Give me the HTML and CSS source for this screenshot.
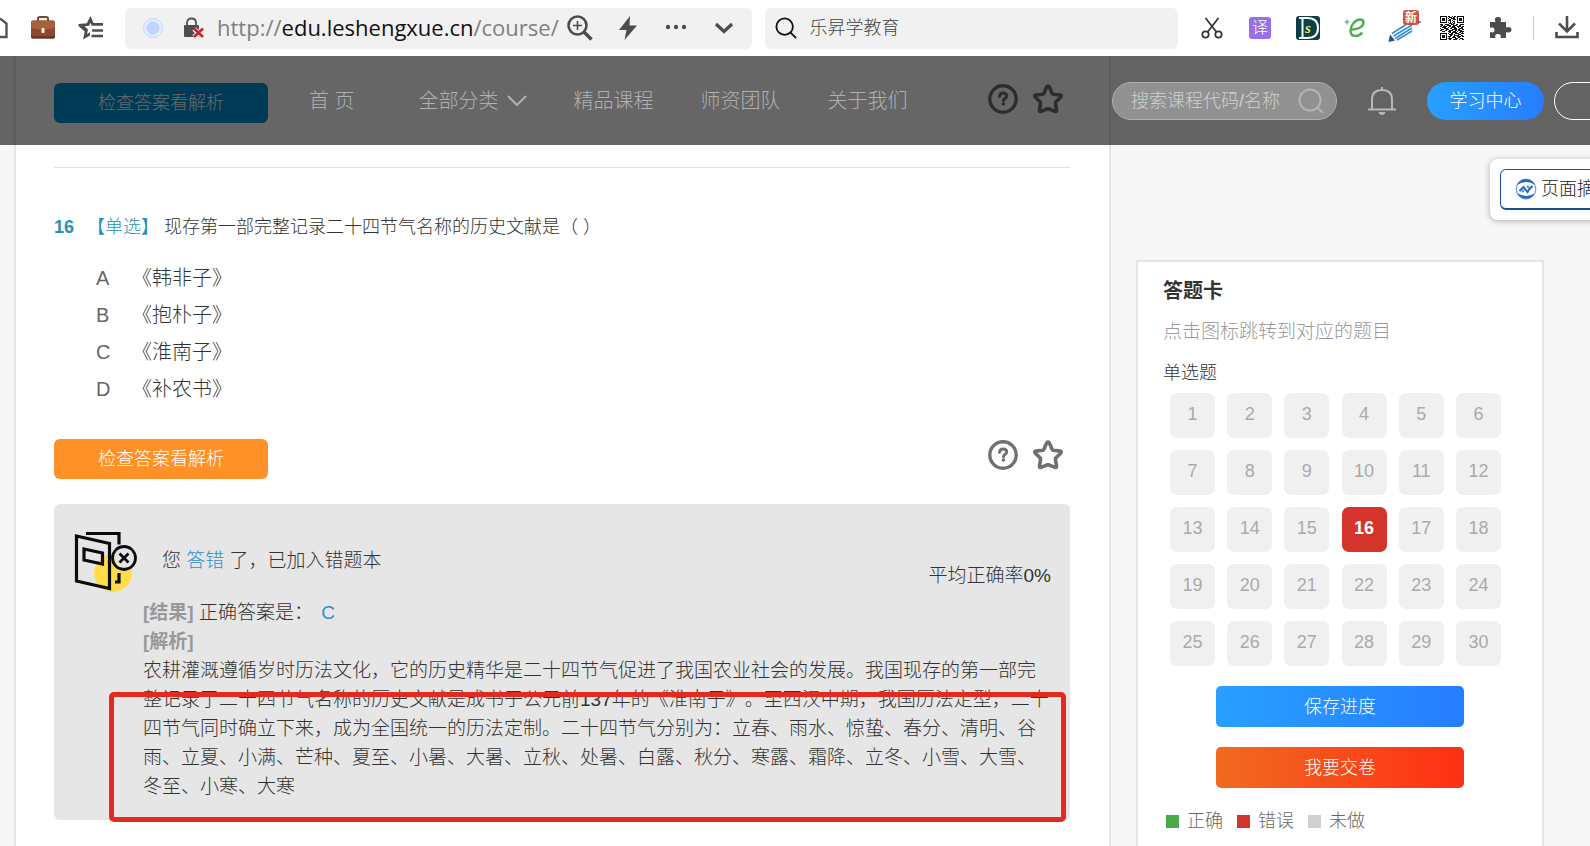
FILE: index.html
```html
<!DOCTYPE html>
<html lang="zh-CN">
<head>
<meta charset="utf-8">
<title>乐昇学教育</title>
<link rel="stylesheet" href="styles.css">
</head>
<body>
<svg class="sprite" aria-hidden="true">
  <symbol id="help" viewBox="0 0 30 30">
    <circle cx="15" cy="15" r="13.200" fill="none" stroke="currentColor" stroke-width="3.400"/>
    <path d="M11.500 12.300c.2-2.300 1.600-3.400 3.600-3.400 2.200 0 3.600 1.200 3.600 3 0 2.700-3.200 2.600-3.200 4.800" fill="none" stroke="currentColor" stroke-width="3" stroke-linecap="round"/>
    <circle cx="15.400" cy="20" r="1.800" fill="currentColor"/>
  </symbol>
  <symbol id="star" viewBox="0 0 32 32">
    <path d="M16 3q1 0 1.500 1.200l2.700 6.300q.3.700 1 .8l7 .8q1.800.4.600 1.900l-5 5q-.5.600-.4 1.200l1.200 7q0 1.800-1.600 1.200l-6.300-2.600q-.7-.2-1.400 0L9 28.400q-1.600.6-1.600-1.200l1.200-7q.1-.6-.4-1.200l-5-5q-1.200-1.500.6-1.900l7-.8q.7-.1 1-.8l2.700-6.300Q15 3 16 3z" fill="none" stroke="currentColor" stroke-width="3.600" stroke-linejoin="round"/>
  </symbol>
</svg>

<div class="toolbar">
  <div class="tool-left">
    <svg class="home" viewBox="0 0 8 24"><path d="M0 2.500l6.500 5V21H0" fill="none" stroke="#555" stroke-width="2.400"/></svg>
    <svg width="26" height="26" viewBox="0 0 26 26">
      <path d="M8 6V3.500Q8 2 10 2h6q2 0 2 1.500V6" fill="none" stroke="#7c4630" stroke-width="2"/>
      <rect x="1" y="5.500" width="24" height="18" rx="2" fill="#8a4a32"/>
      <path d="M1 8q0-2.500 2-2.500h20q2 0 2 2.500v4.500q-12 4-24 0z" fill="#a8613f"/>
      <path d="M1 21v1q0 1.500 2 1.500h20q2 0 2-1.500v-1z" fill="#6b3323"/>
      <rect x="11.500" y="13" width="3" height="5" rx="1" fill="#fff3c9"/>
    </svg>
    <svg width="26" height="26" viewBox="0 0 26 26">
      <path d="M12.500 1l3 7H25v2.800H13.700l-1.200-3-1.300 3-4.700.4 3.500 3.200-1 4.600 3-1.800v3.200L5 24.500l1.700-8L.500 11v-2l8.300-.8z" fill="#4d4d4d"/>
      <path d="M14 15.500H25M13.500 21H25" stroke="#4d4d4d" stroke-width="2.600"/>
    </svg>
  </div>
  <div class="field url">
    <svg width="22" height="22" viewBox="0 0 22 22"><circle cx="11" cy="11" r="9.500" fill="#e4edff" stroke="#c6d9fc"/><circle cx="11" cy="11" r="6.500" fill="#bcd4ff"/></svg>
    <svg class="lock" width="22" height="22" viewBox="0 0 22 22">
      <path d="M4 9V6q0-4.500 4.500-4.500T13 6v3" fill="none" stroke="#555" stroke-width="1.800"/>
      <rect x="1" y="8" width="15" height="12" rx="1" fill="#4d4d4d"/>
      <path d="M11 12l9 8M20 12l-9 8" stroke="#f1f1f1" stroke-width="5"/>
      <path d="M11 11.500l9 8.500M20 11.500L11 20" stroke="#c9252b" stroke-width="2.600"/>
    </svg>
    <div class="address">http://<b>edu.leshengxue.cn</b>/course/</div>
    <div class="url-actions">
      <svg width="26" height="26" viewBox="0 0 26 26" fill="none" stroke="#4d4d4d"><circle cx="10.500" cy="10.500" r="9" stroke-width="2.600"/><path d="M17 17l7.500 7.500" stroke-width="3.600"/><path d="M6 10.500h9M10.500 6v9" stroke-width="1.600"/></svg>
      <svg width="26" height="26" viewBox="0 0 26 26"><path d="M15 1L4 15h7.500L9.500 25 22 10.500h-7.500z" fill="#4d4d4d"/></svg>
      <svg width="26" height="26" viewBox="0 0 26 26" fill="#4d4d4d"><circle cx="5" cy="12" r="2.200"/><circle cx="13" cy="12" r="2.200"/><circle cx="21" cy="12" r="2.200"/></svg>
      <svg width="26" height="26" viewBox="0 0 26 26"><path d="M5 9l8 7.500L21 9" fill="none" stroke="#4d4d4d" stroke-width="3.200"/></svg>
    </div>
  </div>
  <div class="field find">
    <svg width="22" height="22" viewBox="0 0 24 24" fill="none" stroke="#111" stroke-width="2"><circle cx="10.500" cy="10.500" r="9"/><path d="M16.500 16.500L23 23"/></svg>
    <input type="text" value="乐昇学教育" aria-label="搜索">
  </div>
  <div class="extensions">
    <span><svg width="22" height="24" viewBox="0 0 22 24" fill="none" stroke="#333" stroke-width="1.700"><circle cx="4.500" cy="18.500" r="3.200"/><circle cx="17.500" cy="18.500" r="3.200"/><path d="M4.500 2l11 14M17.500 2l-11 14"/></svg></span>
    <span><i class="yi">译</i></span>
    <span><svg width="24" height="24" viewBox="0 0 24 24"><rect width="24" height="24" rx="3" fill="#0d3f49"/><path d="M3 2h8q11 0 11 10T11 22H3M6.500 2v20" fill="none" stroke="#fff" stroke-width="2"/><text x="9" y="17" class="ds">s</text></svg></span>
    <span><svg width="24" height="24" viewBox="0 0 24 24"><path d="M6 13.500c8 .5 13.500-3 13.500-7 0-2-1.600-3-3.500-3-4.500 0-9.500 5.500-9.500 11 0 3.500 2 5.500 5 5.500 2.500 0 5-1.200 6.700-3.500" fill="none" stroke="#4fae4c" stroke-width="2.400"/><path d="M3 3.500v5M.500 6h5" stroke="#4fae4c" stroke-width="1.200"/></svg></span>
    <span><svg width="34" height="36" viewBox="0 0 34 36"><path d="M5 23.500L20 14M6.500 26L25 15M8 28.500L25 18M10 30l15-9" stroke="#2f8fd0" stroke-width="1.500"/><path d="M3 24.500l5 6L1.500 32z" fill="#1c4f94"/><rect x="16" y="0" width="16" height="15" rx="3" fill="#d0563f"/><text x="18" y="12" class="badge">新</text><path d="M31 12h3" stroke="#222"/></svg></span>
    <span><svg width="24" height="24" viewBox="0 0 24 24" shape-rendering="crispEdges"><path fill="none" stroke="#111" d="M0 .5h7M8 .5h2M12 .5h1M14 .5h2M17 .5h7M0 1.500h1M6 1.500h1M9 1.500h3M13 1.500h2M17 1.500h1M23 1.500h1M0 2.500h1M2 2.500h3M6 2.500h1M8 2.500h1M11 2.500h4M17 2.500h1M19 2.500h3M23 2.500h1M0 3.500h1M2 3.500h3M6 3.500h1M9 3.500h2M13 3.500h3M17 3.500h1M19 3.500h3M23 3.500h1M0 4.500h1M2 4.500h3M6 4.500h1M8 4.500h3M12 4.500h1M17 4.500h1M19 4.500h3M23 4.500h1M0 5.500h1M6 5.500h1M10 5.500h1M13 5.500h2M17 5.500h1M23 5.500h1M0 6.500h7M8 6.500h1M10 6.500h1M12 6.500h1M14 6.500h1M17 6.500h7M9 7.500h3M13 7.500h2M0 8.500h3M5 8.500h4M11 8.500h3M16 8.500h2M20 8.500h4M1 9.500h2M4 9.500h1M7 9.500h4M13 9.500h4M19 9.500h2M0 10.500h2M3 10.500h4M9 10.500h2M12 10.500h3M17 10.500h4M22 10.500h2M2 11.500h4M8 11.500h1M11 11.500h5M18 11.500h1M21 11.500h2M0 12.500h1M4 12.500h4M10 12.500h2M14 12.500h3M19 12.500h4M1 13.500h3M6 13.500h3M12 13.500h5M18 13.500h2M22 13.500h2M0 14.500h2M5 14.500h2M9 14.500h4M15 14.500h2M18 14.500h4M2 15.500h3M8 15.500h3M13 15.500h3M17 15.500h1M20 15.500h4M9 16.500h2M12 16.500h5M19 16.500h2M22 16.500h1M0 17.500h7M8 17.500h1M11 17.500h2M15 17.500h4M21 17.500h3M0 18.500h1M6 18.500h1M9 18.500h4M14 18.500h1M18 18.500h3M0 19.500h1M2 19.500h3M6 19.500h1M10 19.500h2M14 19.500h5M21 19.500h2M0 20.500h1M2 20.500h3M6 20.500h1M8 20.500h3M13 20.500h2M17 20.500h4M22 20.500h2M0 21.500h1M2 21.500h3M6 21.500h1M9 21.500h1M12 21.500h4M18 21.500h2M0 22.500h1M6 22.500h1M8 22.500h4M15 22.500h3M20 22.500h3M0 23.500h7M9 23.500h2M13 23.500h4M19 23.500h1M22 23.500h2"/></svg></span>
    <span><svg width="24" height="24" viewBox="0 0 24 24"><path d="M2 6h5.500C6 2.500 7.500 1 10 1s4 1.500 2.500 5H18v5.500c3-1.200 5.500-.3 5.500 2.200S21 17.200 18 16v6h-5.500c1-2.500 0-4-2.500-4s-3.500 1.500-2.500 4H2v-6c3 1 4.500 0 4.500-2s-1.500-3-4.500-2z" fill="#4d4d4d"/></svg></span>
  </div>
  <svg class="download" width="24" height="24" viewBox="0 0 24 24" fill="none" stroke="#4d4d4d" stroke-width="2.600"><path d="M12 0v15M4 7.500l8 8 8-8M1.500 16v5h21v-5"/></svg>
</div>

<div class="page">
  <header class="site-header">
    <nav>
      <a href="#">首 页</a>
      <a href="#" class="all">全部分类 <svg width="20" height="12" viewBox="0 0 20 12"><path d="M1 1l9 9 9-9" fill="none" stroke="currentColor" stroke-width="2"/></svg></a>
      <a href="#">精品课程</a>
      <a href="#">师资团队</a>
      <a href="#">关于我们</a>
    </nav>
    <div class="header-tools">
      <div class="search">
        <input type="text" placeholder="搜索课程代码/名称" aria-label="搜索课程代码/名称">
        <svg width="26" height="26" viewBox="0 0 26 26" fill="none" stroke="#b4b4b4" stroke-width="2"><circle cx="12" cy="12" r="10.500"/><path d="M19.500 19.500L25 25"/></svg>
      </div>
      <svg class="bell" width="30" height="30" viewBox="0 0 30 30" fill="none" stroke="#b8b8b8" stroke-width="2"><path d="M5 23V13.500Q5 4 15 4t10 9.500V23M1 23.500h28M15 1v3"/><path d="M11.500 26h7q-1 3-3.500 3t-3.500-3z" fill="#b8b8b8" stroke="none"/></svg>
      <button class="center">学习中心</button>
      <button class="account" aria-label="账户"></button>
    </div>
  </header>

  <main class="panel">
    <div class="actions">
      <button class="check blue">检查答案看解析</button>
      <div class="marks"><svg class="i-help"><use href="#help"/></svg><svg class="i-star"><use href="#star"/></svg></div>
    </div>
    <hr>
    <h2 class="question"><strong>16</strong><span class="type">【单选】</span><span class="stem">现存第一部完整记录二十四节气名称的历史文献是（ ）</span></h2>
    <ul class="options">
      <li><span>A</span>《韩非子》</li>
      <li><span>B</span>《抱朴子》</li>
      <li><span>C</span>《淮南子》</li>
      <li><span>D</span>《补农书》</li>
    </ul>
    <div class="actions">
      <button class="check">检查答案看解析</button>
      <div class="marks"><svg class="i-help"><use href="#help"/></svg><svg class="i-star"><use href="#star"/></svg></div>
    </div>
    <section class="result">
      <div class="result-head">
        <svg width="64" height="64" viewBox="0 0 64 64" fill="none" stroke="#0c0c0c" stroke-width="3.200">
          <circle cx="39" cy="42" r="19" fill="#ffdc4a" stroke="none"/>
          <path d="M2.500 5l33 7.500v45l-33-7.500z"/>
          <path d="M10 18l18.500 4v11L10 29z"/>
          <path d="M12 2.500h33v11M45 42v9h-4"/>
          <circle cx="50" cy="27" r="11.500" fill="#e6e6e6" stroke="none"/>
          <path d="M42 35a11.500 11.500 0 0 1-3-12l5 13 8 2.500q-6 1-10-3.500z" fill="#ffdc4a" stroke="none"/>
          <circle cx="50" cy="27" r="11.500" stroke-width="2.800"/>
          <path d="M45.500 22.500l9 9M54.500 22.500l-9 9" stroke-width="2.800"/>
        </svg>
        <p>您 <em>答错</em> 了，已加入错题本</p>
        <span class="rate">平均正确率0%</span>
      </div>
      <div class="analysis">
        <p><b>[结果]</b> 正确答案是： <em>C</em></p>
        <p><b>[解析]</b></p>
        <p>农耕灌溉遵循岁时历法文化，它的历史精华是二十四节气促进了我国农业社会的发展。我国现存的第一部完<br>整记录了二十四节气名称的历史文献是成书于公元前137年的《淮南子》。至西汉中期，我国历法定型，二十<br>四节气同时确立下来，成为全国统一的历法定制。二十四节气分别为：立春、雨水、惊蛰、春分、清明、谷<br>雨、立夏、小满、芒种、夏至、小暑、大暑、立秋、处暑、白露、秋分、寒露、霜降、立冬、小雪、大雪、<br>冬至、小寒、大寒</p>
      </div>
      <div class="highlight"></div>
    </section>
  </main>

  <aside class="card">
    <h3>答题卡</h3>
    <p class="hint">点击图标跳转到对应的题目</p>
    <h4>单选题</h4>
    <div class="numbers">
      <button>1</button><button>2</button><button>3</button><button>4</button><button>5</button><button>6</button>
      <button>7</button><button>8</button><button>9</button><button>10</button><button>11</button><button>12</button>
      <button>13</button><button>14</button><button>15</button><button class="wrong">16</button><button>17</button><button>18</button>
      <button>19</button><button>20</button><button>21</button><button>22</button><button>23</button><button>24</button>
      <button>25</button><button>26</button><button>27</button><button>28</button><button>29</button><button>30</button>
    </div>
    <button class="wide save">保存进度</button>
    <button class="wide submit">我要交卷</button>
    <ul class="legend"><li class="ok">正确</li><li class="bad">错误</li><li class="none">未做</li></ul>
  </aside>

  <div class="summary">
    <button>
      <svg width="22" height="22" viewBox="0 0 22 22" fill="none"><circle cx="11" cy="11" r="9.800" stroke="#6da3e6" stroke-width="1.200"/><path d="M2 7A10 10 0 0 1 20 7Q12 1 2 7zM2 15a10 10 0 0 0 18 0q-8 6-18 0z" fill="#2b66c2"/><path d="M4.500 13l4-4 4 5 2-3 3-3" stroke="#2b66c2" stroke-width="2"/><path d="M7 14l2-2M12 8l2 2" stroke="#4a8be0" stroke-width="2"/></svg>
      页面摘要
    </button>
  </div>
</div>
</body>
</html>
```
FILE: styles.css
```css
* { box-sizing: border-box; }

body {
  margin: 0;
  height: 100vh;
  display: flex;
  flex-direction: column;
  overflow: hidden;
  background: #f7f7f7;
  color: #333;
  font: 300 18px/28px "Liberation Sans", "Noto Sans CJK SC", sans-serif;
  text-spacing-trim: space-all;
}

h2, h3, h4, p, ul { margin: 0; padding: 0; font-weight: inherit; }
ul { list-style: none; }
b, strong { font-weight: bold; }
em, i { font-style: normal; }
svg { display: block; flex: none; }
button, input { font: inherit; border: 0; padding: 0; }
button { cursor: pointer; }
a { color: inherit; text-decoration: none; }
.sprite { position: absolute; width: 0; height: 0; }

/* Browser toolbar */
.toolbar {
  flex: none;
  height: 56px;
  display: flex;
  align-items: center;
  background: #fff;
}
.tool-left { flex: none; width: 125px; display: flex; align-items: center; gap: 22px; }
.home { width: 8px; height: 24px; }
.field {
  height: 41px;
  display: flex;
  align-items: center;
  border-radius: 6px;
  background: #f1f1f1;
}
.url { flex: 1; min-width: 0; padding: 0 15px 0 17px; }
.lock { margin-left: 19px; }
.address {
  flex: 1;
  min-width: 0;
  margin-left: 12px;
  overflow: hidden;
  white-space: nowrap;
  color: #808080;
  font: 22px/30px "Open Sans", sans-serif;
  padding-bottom: 2px;
}
.address b { color: #111; font-weight: normal; }
.url-actions { display: flex; gap: 22px; margin-left: 4px; }
.find { flex: 0 0 26%; margin: 0 10px 0 13px; padding: 0 10px; gap: 13px; }
.find input { flex: 1; min-width: 0; background: none; color: #444; }
.extensions { display: flex; align-items: center; }
.extensions span { width: 48px; height: 40px; display: flex; align-items: center; justify-content: center; }
.yi {
  width: 22px;
  height: 22px;
  border-radius: 3px;
  background: #9a70ea;
  color: #fff;
  font-size: 16px;
  line-height: 21px;
  text-align: center;
}
.ds { font: italic bold 15px "Liberation Serif", serif; fill: #e7ef6a; }
.badge { font: bold 12px "Noto Sans CJK SC", sans-serif; fill: #fff; }
.download { box-sizing: content-box; margin: 0 11px 0 9px; padding-left: 21px; border-left: 1px solid #ccc; }

/* Page */
.page {
  position: relative;
  flex: 1;
  min-height: 0;
  display: flex;
  align-items: stretch;
  gap: 25px;
  padding: 0 46px 0 14px;
  overflow: hidden;
}

.site-header {
  position: absolute;
  z-index: 2;
  top: 0;
  left: 0;
  right: 0;
  height: 89px;
  display: flex;
  align-items: center;
  justify-content: space-between;
  overflow: hidden;
  background: rgba(0, 0, 0, 0.6);
}
nav { display: flex; gap: 47px; padding-left: 309px; color: #b0b0b0; font-size: 20px; white-space: nowrap; }
nav .all { display: flex; align-items: center; gap: 8px; margin-left: 17px; }
.header-tools { flex: none; display: flex; align-items: center; margin-right: -84px; }
.search {
  width: 225px;
  height: 38px;
  display: flex;
  align-items: center;
  padding: 0 12px 0 18px;
  border: 1px solid #b0b0b0;
  border-radius: 19px;
  background: #919191;
}
.search input { flex: 1; min-width: 0; background: none; }
.search input::placeholder { color: #d0d0d0; opacity: 1; }
.bell { margin: 0 30px; }
.center {
  width: 117px;
  height: 38px;
  margin-right: 10px;
  border-radius: 19px;
  background: linear-gradient(90deg, #28a0ff, #267dff);
  color: #fff;
}
.account { width: 120px; height: 38px; border: 1px solid #fff; border-radius: 19px; background: none; }

.panel {
  flex: 1;
  min-width: 0;
  padding: 27px 39px 0 38px;
  border: solid #e5e5e5;
  border-width: 0 2px;
  background: #fff;
}
.actions { display: flex; align-items: flex-start; justify-content: space-between; }
.check { width: 214px; height: 40px; border-radius: 6px; background: #ff9128; color: #fff; }
.check.blue { background: #0094d7; }
.marks { display: flex; align-items: center; gap: 14px; padding-right: 6px; color: #707070; }
.marks .i-help { width: 30px; height: 30px; }
.marks .i-star { width: 32px; height: 32px; }
.panel hr { margin: 44px 0 45px; border: 0; border-top: 1px solid #e2e2e2; }

.question { display: flex; font-size: 18px; }
.question strong { width: 33px; color: #2a8fb5; }
.question .type { width: 77px; color: #2a8fb5; }
.options { margin: 19px 0 31px; font-size: 20px; line-height: 37px; }
.options li { display: flex; padding-left: 42px; }
.options span { width: 36px; color: #666; }

.result {
  position: relative;
  margin-top: 25px;
  padding: 27px 15px 19px 20px;
  border-radius: 6px;
  background: #e6e6e6;
  font-size: 19px;
  line-height: 29px;
}
.result em { color: #2f8fcb; }
.result-head { display: flex; align-items: center; gap: 24px; }
.result-head p { margin-bottom: 6px; }
.rate { margin: 24px 4px 0 auto; }
.analysis { padding: 3px 0 0 69px; white-space: nowrap; }
.analysis b { color: #999; }
.analysis em { margin-left: 3px; }
.highlight {
  position: absolute;
  inset: 188px 4px -2px 55px;
  border: 5px solid #e42a1f;
  border-radius: 5px;
}

/* Answer card */
.card {
  flex: none;
  width: 408px;
  margin-top: 204px;
  padding: 15px 25px 0;
  border: 2px solid #e5e5e5;
  border-bottom: 0;
  background: #fff;
}
.card h3 { font-size: 20px; font-weight: bold; }
.hint { margin-top: 13px; color: #999; font-size: 19px; }
.card h4 { margin-top: 13px; font-size: 18px; }
.numbers { display: grid; grid-template-columns: repeat(6, 45px); justify-content: space-between; row-gap: 12px; margin: 6px 16px 0 7px; }
.numbers button { height: 45px; padding-bottom: 4px; border-radius: 7px; background: #f0f0f0; color: #aaa; }
.numbers .wrong { background: #d5342c; color: #fff; font-weight: bold; }
.wide { display: block; width: 248px; height: 41px; margin: 20px 0 0 53px; border-radius: 5px; color: #fff; }
.save { background: linear-gradient(90deg, #28a0ff, #267dff); }
.submit { background: linear-gradient(90deg, #f06a20, #ff3014); }
.legend { display: flex; gap: 14px; margin: 19px 0 0 3px; color: #666; }
.legend li { display: flex; align-items: center; gap: 8px; }
.legend li::before { content: ""; width: 13px; height: 13px; background: #d0d0d0; }
.legend .ok::before { background: #4aa94a; }
.legend .bad::before { background: #d0352e; }

/* Floating page summary tool */
.summary {
  position: absolute;
  top: 103px;
  right: -48px;
  padding: 10px;
  border-radius: 8px;
  background: #fff;
  box-shadow: 0 1px 6px rgba(0, 0, 0, 0.3);
}
.summary button {
  height: 41px;
  display: flex;
  align-items: center;
  gap: 4px;
  padding: 0 14px;
  border: 1px solid #1d5195;
  border-bottom-width: 2px;
  border-radius: 6px;
  background: #fff;
  color: #222;
}
```
